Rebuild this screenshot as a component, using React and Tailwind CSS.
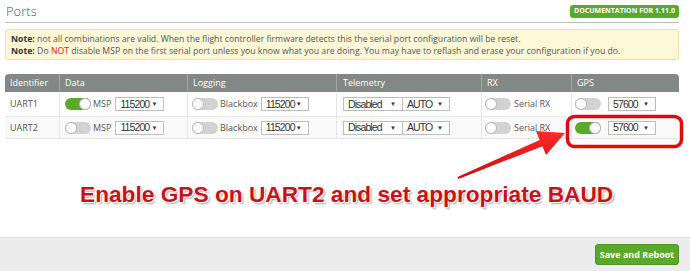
import React from 'react'

// Ports tab screenshot with the red "enable GPS" annotation on top
const COLS = 'grid grid-cols-[55px_128px_149px_145px_90px_107px]'

function Toggle({ on }) {
  return (
    <span className={'relative inline-block w-[26px] h-[12px] rounded-full shrink-0 ' + (on ? 'bg-[#59aa29]' : 'bg-[#d2d2d2]')}>
      <span className={'absolute top-0 w-[12px] h-[12px] rounded-full bg-white border border-[#b5b5b5] ' + (on ? 'right-0' : 'left-0')} />
    </span>
  )
}

function Select({ value, w }) {
  return (
    <span className={'inline-flex items-center justify-between h-[14px] border border-[#bdbdbd] bg-white pl-[4px] pr-[6px] font-["Liberation_Sans",Arial,sans-serif] text-[10.5px] tracking-[-0.9px] text-[#333] ' + w}>
      <span className="leading-none">{value}</span>
      <span className="text-[6px] leading-none tracking-normal">▼</span>
    </span>
  )
}

function Row({ name, msp, gps, last }) {
  return (
    <div className={COLS + ' text-[9px] text-[#555] ' + (last ? 'h-[22px] bg-[#fafafa] border-b border-[#e4e4e4]' : 'h-[25px] bg-white border-b border-[#e8e8e8]')}>
      <div className="flex items-center pl-[5px] border-r border-[#e4e4e4]">{name}</div>
      <div className="flex items-center pl-[5px] border-r border-[#e4e4e4]">
        <Toggle on={msp} />
        <span className="ml-[2px] mr-[4px]">MSP</span>
        <Select value="115200" w="w-[49px]" />
      </div>
      <div className="flex items-center pl-[4px] border-r border-[#e4e4e4]">
        <Toggle />
        <span className="ml-[2px] mr-[3px]">Blackbox</span>
        <Select value="115200" w="w-[48px]" />
      </div>
      <div className="flex items-center pl-[6px] border-r border-[#e4e4e4]">
        <Select value="Disabled" w="w-[60px]" />
        <Select value="AUTO" w="w-[48px] -ml-px" />
      </div>
      <div className="flex items-center pl-[3px] border-r border-[#e4e4e4]">
        <Toggle />
        <span className="ml-[3px]">Serial RX</span>
      </div>
      <div className="flex items-center pl-[3px]">
        <Toggle on={gps} />
        <span className="ml-[7px] flex"><Select value="57600" w="w-[48px]" /></span>
      </div>
    </div>
  )
}

export default function App() {
  return (
    <div className="relative w-[690px] h-[271px] bg-white overflow-hidden flex flex-col font-['Open_Sans',sans-serif]">
      <div className="flex-1 px-[5px]">
        <div className="flex items-end justify-between h-[23px] border-b border-[#b9c5b4] w-[674px]">
          <span className="text-[13px] font-light text-[#555] leading-none pb-[4px] pl-px">Ports</span>
          <span className="mb-[4px] h-[13px] px-[4px] flex items-center rounded-[3px] bg-[#59aa29] text-white text-[7px] font-bold">DOCUMENTATION FOR 1.11.0</span>
        </div>

        <div className="mt-[6px] w-[674px] h-[31px] rounded-[3px] border border-[#ece1a6] bg-[#fef8d6] px-[5px] pt-[3px] text-[8.7px] leading-[12px] text-[#555]">
          <div><b className="text-[#333]">Note:</b> not all combinations are valid. When the flight controller firmware detects this the serial port configuration will be reset.</div>
          <div><b className="text-[#333]">Note:</b> Do <span className="text-[#e2231a]">NOT</span> disable MSP on the first serial port unless you know what you are doing. You may have to reflash and erase your configuration if you do.</div>
        </div>

        <div className="mt-[14px] w-[674px]">
          <div className={COLS + ' h-[18px] bg-[#828885] rounded-t-[4px] text-white text-[9px]'}>
            <div className="flex items-center pl-[5px] border-r border-[#a3a8a5]">Identifier</div>
            <div className="flex items-center pl-[5px] border-r border-[#a3a8a5]">Data</div>
            <div className="flex items-center pl-[5px] border-r border-[#a3a8a5]">Logging</div>
            <div className="flex items-center pl-[6px] border-r border-[#a3a8a5]">Telemetry</div>
            <div className="flex items-center pl-[5px] border-r border-[#a3a8a5]">RX</div>
            <div className="flex items-center pl-[5px]">GPS</div>
          </div>
          <Row name="UART1" msp />
          <Row name="UART2" gps last />
        </div>

        <div className="mt-[42px] pl-[75px] font-['Liberation_Sans',Arial,sans-serif] font-bold text-[22.7px] leading-[26px] text-[#c8121a] [text-shadow:1px_1px_0_#fff,-1px_-1px_0_#fff,2px_2px_2px_rgba(0,0,0,0.35)]">
          Enable GPS on UART2 and set appropriate BAUD
        </div>
      </div>

      <div className="h-[34px] bg-[#ececec] border-t border-[#dedede] flex items-center justify-end pr-[11px]">
        <button className="h-[21px] w-[84px] rounded-[3px] bg-[#59aa29] border border-[#4c9423] text-white text-[9px] font-bold">Save and Reboot</button>
      </div>

      <svg className="absolute inset-0 pointer-events-none" width="690" height="271" viewBox="0 0 690 271">
        <defs>
          <linearGradient id="arr" x1="0" y1="0" x2="0" y2="1">
            <stop offset="0" stopColor="#ff2a2a" />
            <stop offset="1" stopColor="#c80d0d" />
          </linearGradient>
        </defs>
        <rect x="567.5" y="116.5" width="114" height="30" rx="7" fill="none" stroke="#e3090f" strokeWidth="3.5" />
        <polygon points="457.6,177.1 539.6,139.9 536,131.1 565,133 546,155.1 542.4,146.3 458.4,178.9" fill="url(#arr)" />
      </svg>
    </div>
  )
}
